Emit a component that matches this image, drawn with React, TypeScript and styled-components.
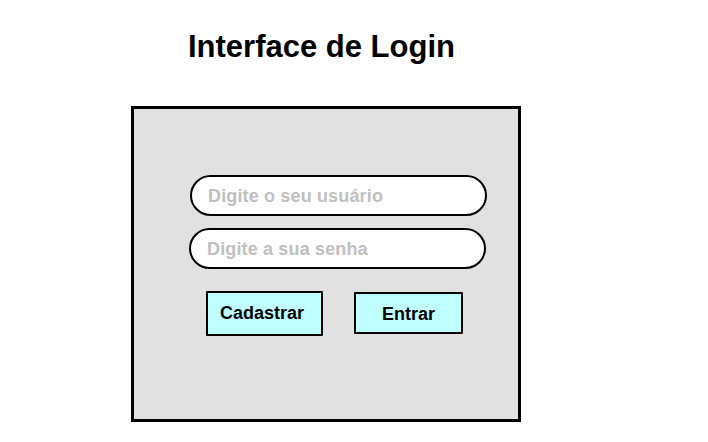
import styled, { createGlobalStyle } from 'styled-components';

const GlobalStyle = createGlobalStyle`
  html, body {
    margin: 0;
    padding: 0;
    background: #ffffff;
  }

  body {
    font-family: "Liberation Sans", Arial, sans-serif;
  }
`;

export default function App() {
  return (
    <>
      <GlobalStyle />
      <Page>
        <Title>Interface de Login</Title>
        <Panel>
          <Field placeholder="Digite o seu usuário" />
          <Field placeholder="Digite a sua senha" $shift={-1} />
          <Actions>
            <ActionButton $width={117} $height={45} $textLeft={5}>
              Cadastrar
            </ActionButton>
            <ActionButton $width={109} $height={42} $offset={1} $textDrop={3}>
              Entrar
            </ActionButton>
          </Actions>
        </Panel>
      </Page>
    </>
  );
}

const Page = styled.main`
  display: flex;
  flex-direction: column;
  align-items: flex-start;
  padding: 30px 0 0 131px;
  height: 442px;
  box-sizing: border-box;
`;

const Title = styled.h1`
  margin: 0 0 0 57px;
  font-size: 31px;
  font-weight: bold;
  line-height: 34px;
  color: #000000;
`;

const Panel = styled.section`
  display: flex;
  flex-direction: column;
  width: 390px;
  height: 316px;
  margin-top: 42px;
  padding: 66px 0 0 56px;
  box-sizing: border-box;
  background: #e1e1e1;
  border: 3px solid #000000;
`;

const Field = styled.input<{ $shift?: number }>`
  width: 297px;
  height: 41px;
  margin: 0 0 12px ${(p) => p.$shift ?? 0}px;
  padding: 2px 0 0 16px;
  box-sizing: border-box;
  background: #ffffff;
  border: 2.5px solid #000000;
  border-radius: 21px;
  font-family: "Liberation Sans", Arial, sans-serif;
  font-size: 18px;
  font-weight: bold;
  letter-spacing: 0.15px;
  outline: none;

  &::placeholder {
    color: #c0c0c0;
  }
`;

const Actions = styled.div`
  display: flex;
  align-items: flex-start;
  gap: 31px;
  margin: 10px 0 0 16px;
`;

const ActionButton = styled.button<{
  $width: number;
  $height: number;
  $offset?: number;
  $textDrop?: number;
  $textLeft?: number;
}>`
  width: ${(p) => p.$width}px;
  height: ${(p) => p.$height}px;
  margin-top: ${(p) => p.$offset ?? 0}px;
  padding: ${(p) => p.$textDrop ?? 0}px ${(p) => p.$textLeft ?? 0}px 0 0;
  background: #c0ffff;
  border: 2px solid #000000;
  border-radius: 1px;
  font-family: "Liberation Sans", Arial, sans-serif;
  font-size: 18px;
  font-weight: bold;
  color: #000000;
`;
